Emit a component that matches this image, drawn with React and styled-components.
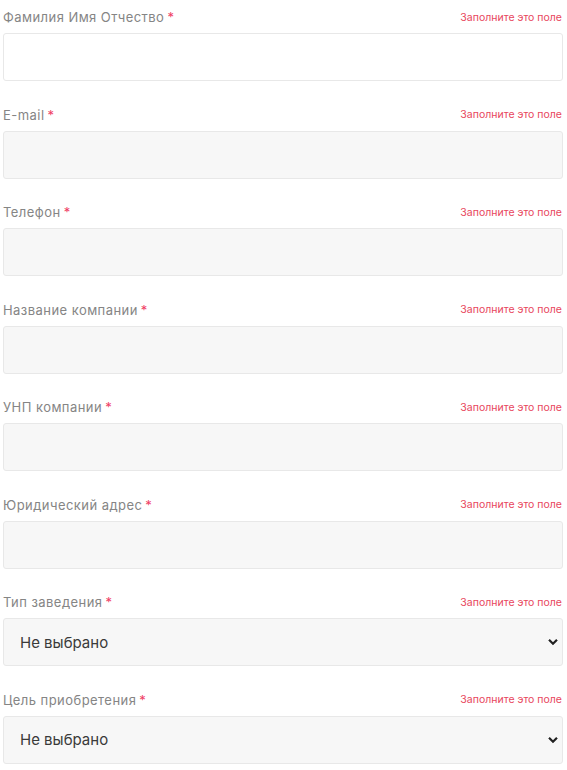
import React from "react";
import styled, { createGlobalStyle } from "styled-components";

const Global = createGlobalStyle`
  html, body { margin: 0; padding: 0; background: #fff; }
  body { font-family: Inter, "Open Sans", sans-serif; }
  * { box-sizing: border-box; }
`;

const Form = styled.form`
  display: flex;
  flex-direction: column;
  padding: 7px 4px 0 3px;
`;

const Group = styled.div`
  display: flex;
  flex-direction: column;
  margin-bottom: 23.57px;
`;

const LabelRow = styled.div`
  display: flex;
  justify-content: space-between;
  align-items: center;
  height: 20px;
  margin-bottom: 6px;
`;

const Label = styled.label`
  font-size: 13px;
  color: #858585;
  letter-spacing: 0.45px;
`;

const Star = styled.span`
  color: #ef3d64;
  margin-left: 3px;
`;

const Error = styled.span`
  font-size: 10.5px;
  color: #e8455c;
  margin-right: 1px;
`;

const Input = styled.input`
  height: 48px;
  width: 100%;
  border: 1px solid #e8e8e8;
  border-radius: 3px;
  background: ${(p) => (p.$active ? "#fff" : "#f7f7f7")};
  outline: none;
  font-family: inherit;
  font-size: 15px;
  padding: 0 16px;
`;

const SelectWrap = styled.div`
  position: relative;
`;

const Select = styled.select`
  appearance: none;
  -webkit-appearance: none;
  height: 48px;
  width: 100%;
  border: 1px solid #e8e8e8;
  border-radius: 3px;
  background: #f7f7f7;
  font-family: inherit;
  font-size: 15px;
  color: #3a3a3a;
  padding: 0 16px;
  outline: none;
`;

const Chevron = styled.svg`
  position: absolute;
  right: 5px;
  top: 50%;
  transform: translateY(-50%);
  pointer-events: none;
`;

const fields = [
  { label: "Фамилия Имя Отчество", active: true },
  { label: "E-mail" },
  { label: "Телефон" },
  { label: "Название компании" },
  { label: "УНП компании" },
  { label: "Юридический адрес" },
  { label: "Тип заведения", select: true },
  { label: "Цель приобретения", select: true },
];

export default function App() {
  return (
    <>
      <Global />
      <Form>
        {fields.map((f) => (
          <Group key={f.label}>
            <LabelRow>
              <Label>
                {f.label}
                <Star>*</Star>
              </Label>
              <Error>Заполните это поле</Error>
            </LabelRow>
            {f.select ? (
              <SelectWrap>
                <Select defaultValue="">
                  <option value="">Не выбрано</option>
                </Select>
                <Chevron width="10" height="7" viewBox="0 0 10 7">
                  <path d="M1 1.2 L5 5.2 L9 1.2" fill="none" stroke="#222" strokeWidth="2.2" />
                </Chevron>
              </SelectWrap>
            ) : (
              <Input $active={f.active} />
            )}
          </Group>
        ))}
      </Form>
    </>
  );
}
